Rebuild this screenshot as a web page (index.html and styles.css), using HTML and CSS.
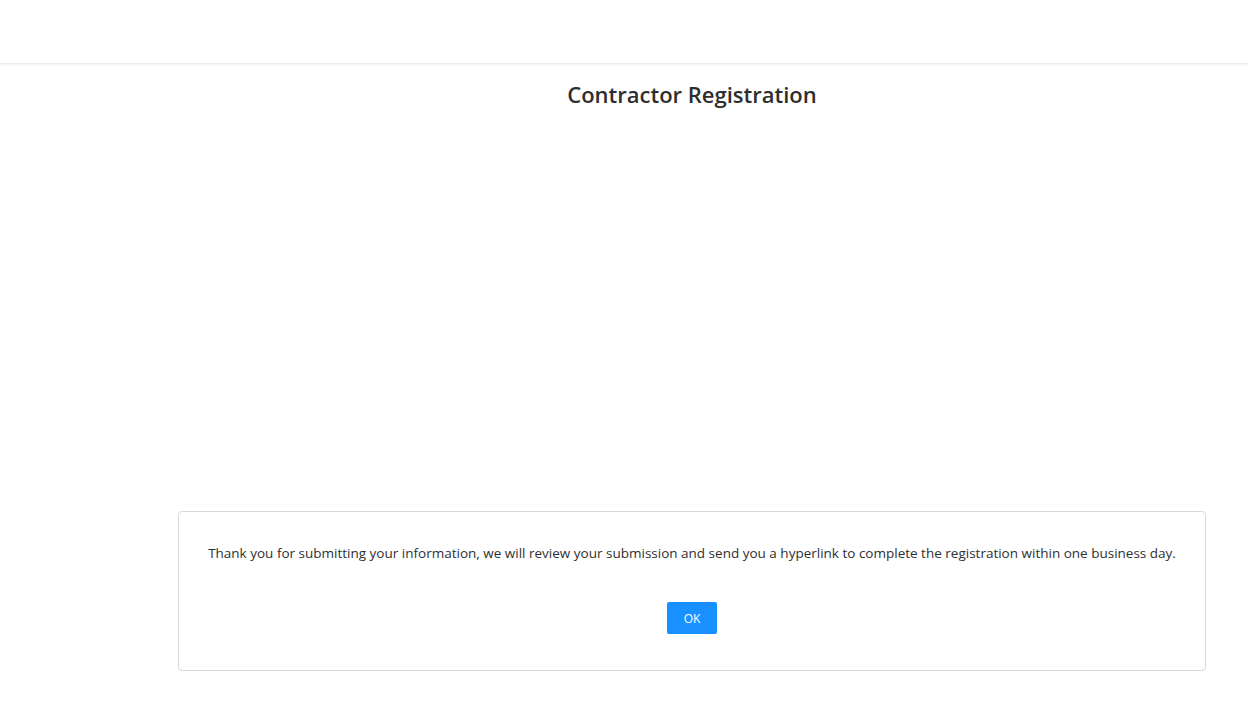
FILE: index.html
```html
<!DOCTYPE html>
<html lang="en">
<head>
<meta charset="utf-8">
<title>Contractor Registration</title>
<link rel="stylesheet" href="styles.css">
</head>
<body>
<header class="topbar"></header>
<div class="layout">
  <aside class="side"></aside>
  <main class="content">
    <h1 class="title">Contractor Registration</h1>
    <div class="spacer"></div>
    <section class="notice">
      <p class="notice-text">Thank you for submitting your information, we will review your submission and send you a hyperlink to complete the registration within one business day.</p>
      <div class="actions"><button class="ok-btn" type="button">OK</button></div>
    </section>
  </main>
</div>
</body>
</html>
```
FILE: styles.css
```css
html, body {
  margin: 0;
  padding: 0;
  background: #fff;
  font-family: "Open Sans", "Noto Sans", "Liberation Sans", sans-serif;
  color: #333;
}
.topbar {
  height: 63px;
  background: #fff;
  border-bottom: 1px solid #ececec;
  box-shadow: 0 1px 3px rgba(0,0,0,0.06);
}
.layout {
  display: flex;
}
.side {
  width: 136px;
  flex: 0 0 136px;
}
.content {
  flex: 1;
  padding: 0 42px;
  display: flex;
  flex-direction: column;
}
.title {
  margin: 14px 0 0;
  text-align: center;
  font-size: 22px;
  font-weight: 600;
  line-height: 32px;
  color: #2e2e2e;
}
.spacer {
  height: 401px;
}
.notice {
  border: 1px solid #d9d9d9;
  border-radius: 4px;
  padding: 31px 0 36px;
  display: flex;
  flex-direction: column;
  align-items: center;
}
.notice-text {
  margin: 0;
  font-size: 13.5px;
  line-height: 20px;
  color: #2f2f2f;
  font-weight: 500;
  text-align: center;
}
.actions {
  margin-top: 39px;
}
.ok-btn {
  width: 50px;
  height: 32px;
  border: none;
  border-radius: 2px;
  background: #1890ff;
  color: #fff;
  font-family: inherit;
  font-size: 12px;
  padding: 0;
  cursor: pointer;
}
```
